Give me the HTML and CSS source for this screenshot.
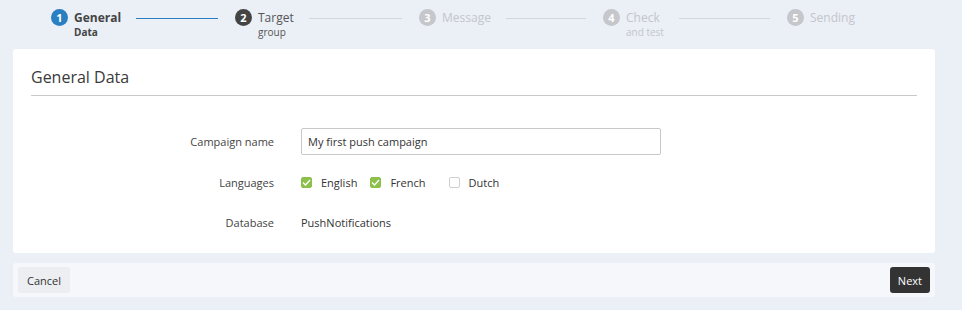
FILE: index.html
```html
<!DOCTYPE html>
<html>
<head>
<meta charset="utf-8">
<link rel="stylesheet" href="styles.css">
</head>
<body>
<div class="page">
  <div class="stepper">
    <div class="step done">
      <span class="num">1</span>
      <span class="lbl"><span class="t">General</span><span class="s">Data</span></span>
      <span class="line"></span>
    </div>
    <div class="step current">
      <span class="num">2</span>
      <span class="lbl"><span class="t">Target</span><span class="s">group</span></span>
      <span class="line"></span>
    </div>
    <div class="step">
      <span class="num">3</span>
      <span class="lbl"><span class="t">Message</span></span>
      <span class="line"></span>
    </div>
    <div class="step">
      <span class="num">4</span>
      <span class="lbl"><span class="t">Check</span><span class="s">and test</span></span>
      <span class="line"></span>
    </div>
    <div class="step last">
      <span class="num">5</span>
      <span class="lbl"><span class="t">Sending</span></span>
    </div>
  </div>

  <div class="card">
    <h2 class="card-title">General Data</h2>
    <div class="form">
      <div class="row">
        <label class="label">Campaign name</label>
        <div class="field"><input class="input" type="text" value="My first push campaign"></div>
      </div>
      <div class="row">
        <label class="label">Languages</label>
        <div class="field checks">
          <span class="check"><span class="box on"><svg width="9" height="7" viewBox="0 0 9 7"><path d="M1 3.5 L3.5 6 L8 1" fill="none" stroke="#fff" stroke-width="1.4"/></svg></span>English</span>
          <span class="check"><span class="box on"><svg width="9" height="7" viewBox="0 0 9 7"><path d="M1 3.5 L3.5 6 L8 1" fill="none" stroke="#fff" stroke-width="1.4"/></svg></span>French</span>
          <span class="check off"><span class="box"></span>Dutch</span>
        </div>
      </div>
      <div class="row">
        <label class="label">Database</label>
        <div class="field">PushNotifications</div>
      </div>
    </div>
  </div>

  <div class="footer">
    <button class="btn cancel">Cancel</button>
    <button class="btn next">Next</button>
  </div>
</div>
</body>
</html>
```
FILE: styles.css
```css
html, body {
  margin: 0;
  padding: 0;
  background: #ebeff6;
  font-family: "Open Sans", "Noto Sans", sans-serif;
  color: #333;
}
.page {
  padding: 0 13px;
  width: 922px;
}
.stepper {
  display: flex;
  height: 49px;
  padding-left: 38px;
  box-sizing: border-box;
}
.step {
  display: flex;
  align-items: flex-start;
  width: 184px;
  flex: none;
  padding-top: 9px;
  box-sizing: border-box;
}
.step.last { width: auto; }
.num {
  width: 17px;
  height: 17px;
  border-radius: 50%;
  background: #c5c7cb;
  color: #fff;
  font-size: 11px;
  font-weight: 700;
  line-height: 17px;
  text-align: center;
  flex: none;
}
.lbl {
  display: flex;
  flex-direction: column;
  margin-left: 6px;
  color: #c3c6cc;
}
.lbl .t {
  font-size: 12px;
  line-height: 17px;
}
.lbl .s {
  font-size: 10px;
  line-height: 12px;
}
.line {
  flex: 1;
  height: 1px;
  background: #d3d6db;
  margin: 9px 17px 0 15px;
}
.step.done .num { background: #2a7fc2; }
.step.done .lbl { color: #444; }
.step.done .lbl .t, .step.done .lbl .s { font-weight: 700; }
.step.done .line { background: #2a7fc2; }
.step.current .num { background: #444; }
.step.current .lbl { color: #555; }

.card {
  background: #fff;
  border-radius: 3px;
  padding: 14px 18px 22px;
  height: 204px;
  box-sizing: border-box;
}
.card-title {
  margin: 0;
  font-size: 16px;
  font-weight: 400;
  color: #3a3a3a;
  line-height: 29px;
  padding-bottom: 3px;
  border-bottom: 1px solid #c9c9c9;
}
.form {
  padding-top: 32px;
}
.row {
  display: flex;
  align-items: center;
  font-size: 11px;
  margin-bottom: 14px;
  min-height: 26px;
}
.label {
  width: 243px;
  text-align: right;
  padding-right: 27px;
  flex: none;
  color: #444;
}
.field {
  color: #333;
}
.input {
  width: 360px;
  height: 27px;
  box-sizing: border-box;
  border: 1px solid #c8c8c8;
  border-radius: 2px;
  padding: 0 6px;
  font-family: inherit;
  font-size: 11px;
  color: #333;
  outline: none;
}
.checks {
  display: flex;
  align-items: center;
}
.check {
  display: flex;
  align-items: center;
  margin-right: 13px;
}
.check.off {
  margin-left: 10px;
}
.box {
  width: 11px;
  height: 11px;
  border: 1px solid #cfcfcf;
  border-radius: 2px;
  margin-right: 9px;
  display: flex;
  align-items: center;
  justify-content: center;
  box-sizing: border-box;
  background: #fff;
}
.box.on {
  background: #8cc04b;
  border-color: #8cc04b;
}
.footer {
  margin-top: 10px;
  background: #f5f7fa;
  border-radius: 3px;
  height: 34px;
  display: flex;
  align-items: center;
  justify-content: space-between;
  padding: 0 5px;
}
.btn {
  font-family: inherit;
  font-size: 11px;
  height: 26px;
  border: none;
  border-radius: 3px;
  padding: 0 9px;
  cursor: pointer;
}
.cancel {
  background: #eceef1;
  color: #333;
}
.next {
  background: #333;
  color: #fff;
  padding: 0 8px;
}
```
